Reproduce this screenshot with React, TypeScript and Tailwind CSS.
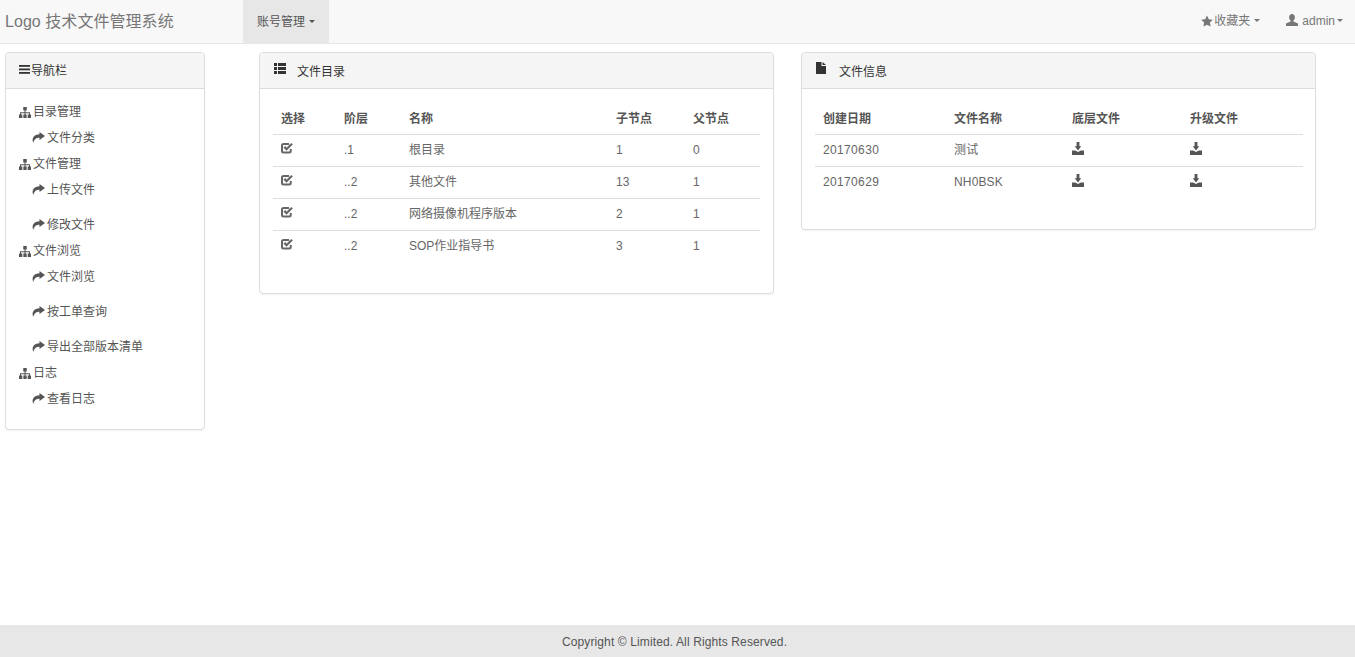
const cjk = "font-['Liberation_Sans','Noto_Sans_CJK_SC',sans-serif]";

// Bootstrap-style glyphs drawn on small pixel grids
function Sitemap() {
  return (
    <svg width="12" height="11" viewBox="0 0 12 11" className="shrink-0" fill="currentColor">
      <rect x="4.250" y="0" width="3.500" height="3.500" />
      <path d="M5.500 3h1v2.200H11V8h-1V6.200H6.500V8h-1V6.200H2V8H1V5.200h4.500z" />
      <rect x="0" y="7.500" width="3.300" height="3.500" />
      <rect x="4.350" y="7.500" width="3.300" height="3.500" />
      <rect x="8.700" y="7.500" width="3.300" height="3.500" />
    </svg>
  );
}

function Share() {
  return (
    <svg width="13" height="11" viewBox="0 0 13 11" className="shrink-0 -translate-y-[1px]" fill="currentColor">
      <path d="M7.500 0L13 4 7.500 8V5.800C4.500 5.800 2.500 7 1.200 11 -.6 6 2 2.300 7.500 2.200z" />
    </svg>
  );
}

function CheckBox() {
  return (
    <svg width="12" height="12" viewBox="0 0 12 12" fill="none" stroke="currentColor">
      <path d="M9.700 7v2a1.500 1.500 0 0 1-1.500 1.500H2.500A1.500 1.500 0 0 1 1 9V3.500A1.500 1.500 0 0 1 2.500 2H8" strokeWidth="2" />
      <path d="M3.300 4.800l2.200 2.400L11 1.800" strokeWidth="2.300" />
    </svg>
  );
}

function Save() {
  return (
    <svg width="12" height="13" viewBox="0 0 12 13" fill="currentColor">
      <path d="M4.600 0h2.800v4.200h1.800L6 8.500 2.800 4.200h1.800z" />
      <path d="M0 8.500h3.200L6 10l2.800-1.500H12V13H0z" />
    </svg>
  );
}

function ThList() {
  return (
    <svg width="12" height="11" viewBox="0 0 12 11" fill="currentColor">
      <rect x="0" y="0" width="3" height="3" />
      <rect x="4" y="0" width="8" height="3" />
      <rect x="0" y="4" width="3" height="3" />
      <rect x="4" y="4" width="8" height="3" />
      <rect x="0" y="8" width="3" height="3" />
      <rect x="4" y="8" width="8" height="3" />
    </svg>
  );
}

function FileGlyph() {
  return (
    <svg width="10" height="12" viewBox="0 0 10 12" fill="currentColor">
      <path d="M0 0h5.500v4H10v8H0z" />
      <path d="M6.500 0L10 3H6.500z" />
    </svg>
  );
}

function Hamburger() {
  return (
    <svg width="11" height="9" viewBox="0 0 11 9" fill="currentColor" className="shrink-0">
      <rect width="11" height="1.800" />
      <rect y="3.500" width="11" height="1.800" />
      <rect y="7" width="11" height="1.800" />
    </svg>
  );
}

function Star() {
  return (
    <svg width="12" height="12" viewBox="0 0 12 12" fill="currentColor" className="shrink-0">
      <path d="M6 .5l1.800 3.700 4 .6-2.900 2.800.7 4L6 9.700l-3.600 1.900.7-4L.2 4.800l4-.6z" />
    </svg>
  );
}

function User() {
  return (
    <svg width="12" height="12" viewBox="0 0 12 12" fill="currentColor" className="shrink-0 -translate-y-[1px]">
      <path d="M6 0c1.800 0 2.900 1.300 2.900 3.200 0 1.500-.7 2.700-1.500 3.300v1.100L12 9.600V12H0V9.600l4.600-2V6.500c-.8-.6-1.500-1.800-1.500-3.300C3.100 1.300 4.200 0 6 0z" />
    </svg>
  );
}

function Caret({ className }: { className: string }) {
  return <span className={`inline-block h-0 w-0 border-x-[3px] border-t-[3px] border-x-transparent border-t-current ${className}`} />;
}

function Panel({ icon, title, className, headerClass, children }: { icon: React.ReactNode; title: string; className: string; headerClass: string; children: React.ReactNode }) {
  return (
    <section className={`rounded border border-[#ddd] bg-white shadow-[0_1px_1px_rgba(0,0,0,0.05)] ${className}`}>
      <header className={`flex h-[36px] items-center rounded-t border-b border-[#ddd] bg-[#f5f5f5] text-[12px] text-[#333] ${headerClass}`}>
        {icon}
        {title}
      </header>
      {children}
    </section>
  );
}

const navGroups = [
  { title: "目录管理", links: [["文件分类", 0]] },
  { title: "文件管理", links: [["上传文件", 0], ["修改文件", 9]] },
  { title: "文件浏览", links: [["文件浏览", 0], ["按工单查询", 9], ["导出全部版本清单", 9]] },
  { title: "日志", links: [["查看日志", 0]] },
] as const;

const directoryRows = [
  [".1", "根目录", "1", "0"],
  ["..2", "其他文件", "13", "1"],
  ["..2", "网络摄像机程序版本", "2", "1"],
  ["..2", "SOP作业指导书", "3", "1"],
];

const fileRows = [
  ["20170630", "测试"],
  ["20170629", "NH0BSK"],
];

function Th({ className, children }: { className: string; children: React.ReactNode }) {
  return <th className={`h-[32px] border-b border-[#ddd] p-0 pl-2 pt-[2px] text-left text-[12px] font-bold ${className}`}>{children}</th>;
}

function Td({ children }: { children: React.ReactNode }) {
  return <td className="h-[32px] border-b border-[#ddd] p-0 pl-2 align-middle text-[12px] text-[#666] [tr:last-child>&]:border-b-0">{children}</td>;
}

export default function App() {
  return (
    <div className={`flex h-[657px] flex-col overflow-hidden bg-white text-[#555] ${cjk}`}>
      <nav className="flex h-[44px] shrink-0 items-center border-b border-[#e7e7e7] bg-[#f8f8f8] text-[#777]">
        <span className="w-[243px] pl-[5px] text-[16px] tracking-[0.05px]">Logo 技术文件管理系统</span>
        <button className="flex h-full w-[86px] items-center justify-center bg-[#e7e7e7] text-[12px] text-[#555]">
          账号管理<Caret className="ml-[4px]" />
        </button>
        <div className="ml-auto flex items-center pb-[2px] pr-[12px] text-[12px]">
          <span className="flex items-center"><Star /><span className="ml-[1px]">收藏夹</span><Caret className="ml-[4px]" /></span>
          <span className="ml-[26px] flex items-center"><User /><span className="ml-[4px]">admin</span><Caret className="ml-[2px]" /></span>
        </div>
      </nav>

      <main className="flex flex-1 items-start pl-[5px] pt-[8px]">
        <Panel className="w-[200px]" headerClass="pl-[13px] [&>svg]:mr-px [&>svg]:-translate-y-[1px]" title="导航栏" icon={<Hamburger />}>
          <div className="px-[13px] pb-[17px] pt-[10px] text-[12px]">
            {navGroups.map((group) => (
              <div key={group.title}>
                <div className="flex h-[26px] items-center gap-[2px]"><Sitemap />{group.title}</div>
                {group.links.map(([label, gap]) => (
                  <div key={label} className={`flex h-[26px] items-center gap-[2px] pl-[13px] ${gap ? "mt-[9px]" : ""}`}>
                    <Share />{label}
                  </div>
                ))}
              </div>
            ))}
          </div>
        </Panel>

        <Panel className="ml-[54px] w-[515px]" headerClass="pl-[14px] pt-[2px] [&>svg]:mr-[11px] [&>svg]:-translate-y-[3px]" title="文件目录" icon={<ThList />}>
          <div className="px-[13px] pb-[31px] pt-[13px]">
            <table className="w-full table-fixed border-collapse">
              <thead>
                <tr>
                  <Th className="w-[63px]">选择</Th>
                  <Th className="w-[65px]">阶层</Th>
                  <Th className="w-[207px]">名称</Th>
                  <Th className="w-[77px]">子节点</Th>
                  <Th className="">父节点</Th>
                </tr>
              </thead>
              <tbody>
                {directoryRows.map((row, index) => (
                  <tr key={index}>
                    <Td><span className="block -translate-y-[2px]"><CheckBox /></span></Td>
                    {row.map((cell, cellIndex) => <Td key={cellIndex}>{cell}</Td>)}
                  </tr>
                ))}
              </tbody>
            </table>
          </div>
        </Panel>

        <Panel className="ml-[27px] w-[515px]" headerClass="pl-[14px] pt-[2px] [&>svg]:mr-[13px] [&>svg]:-translate-y-[4px]" title="文件信息" icon={<FileGlyph />}>
          <div className="pb-[31px] pl-[13px] pr-[12px] pt-[13px]">
            <table className="w-full table-fixed border-collapse">
              <thead>
                <tr>
                  <Th className="w-[131px]">创建日期</Th>
                  <Th className="w-[118px]">文件名称</Th>
                  <Th className="w-[118px]">底层文件</Th>
                  <Th className="">升级文件</Th>
                </tr>
              </thead>
              <tbody>
                {fileRows.map(([date, name]) => (
                  <tr key={date}>
                    <Td><span className="tracking-[0.35px]">{date}</span></Td>
                    <Td><span className="tracking-[0.15px]">{name}</span></Td>
                    <Td><span className="block -translate-y-[2px] text-[#555]"><Save /></span></Td>
                    <Td><span className="block -translate-y-[2px] text-[#555]"><Save /></span></Td>
                  </tr>
                ))}
              </tbody>
            </table>
          </div>
        </Panel>
      </main>

      <footer className="flex h-[32px] shrink-0 items-center justify-center bg-[#e7e7e7] pr-[6px] pt-px text-[12px] tracking-[0.12px]">
        Copyright © Limited. All Rights Reserved.
      </footer>
    </div>
  );
}
